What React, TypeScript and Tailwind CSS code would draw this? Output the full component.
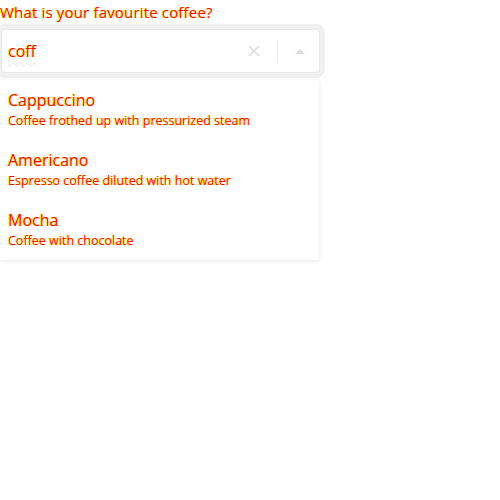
import React from "react";

const txt = "text-[#ff0000] [text-shadow:-1px_0_0_#ffff00]";

const items = [
  { t: "Cappuccino", d: "Coffee frothed up with pressurized steam" },
  { t: "Americano", d: "Espresso coffee diluted with hot water" },
  { t: "Mocha", d: "Coffee with chocolate" },
];

export default function App() {
  return (
    <div className="w-[500px] h-[500px] bg-white font-['Open_Sans',sans-serif] overflow-hidden">
      <div className={`text-[15px] tracking-[0.17px] leading-[24px] ${txt}`}>What is your favourite coffee?</div>
      <div className="pt-[5px] pl-[1px]">
        <div className="w-[319px] h-[44px] rounded-[4px] bg-white border border-[#e8e8e8] shadow-[0_0_0_5px_#f0f0f0] flex items-center">
          <span className="flex-1 pl-[6px] text-[16px] leading-[24px]">
            <span className="relative inline-block">
              <span className={txt}>coff</span>
              <span className="absolute left-0 top-0 text-transparent underline decoration-wavy decoration-[#e2e2e2] decoration-1 underline-offset-[5px]">
                coff
              </span>
            </span>
          </span>
          <span className="w-[36px] mr-[5px] flex justify-center">
            <svg width="14" height="14" viewBox="0 0 14 14" stroke="#dcdcdc" strokeWidth="1.6">
              <path d="M2 2L12 12M12 2L2 12" />
            </svg>
          </span>
          <span className="w-px h-[24px] bg-[#eeeeee]" />
          <span className="w-[41px] pl-[3px] flex justify-center">
            <svg width="10" height="6" viewBox="0 0 10 6">
              <path d="M0 6L5 1L10 6Z" fill="#dddddd" />
            </svg>
          </span>
        </div>
      </div>
      <div className="w-[319px] h-[180px] bg-white rounded-[3px] shadow-[0_1px_4px_rgba(0,0,0,0.1)] pt-[8px] mt-[7px]">
        {items.map((it) => (
          <div key={it.t} className="h-[60px] px-[8px]">
            <div className={`text-[16px] leading-[24px] ${txt}`}>{it.t}</div>
            <div className={`text-[12.5px] leading-[18px] ${txt}`}>{it.d}</div>
          </div>
        ))}
      </div>
    </div>
  );
}
